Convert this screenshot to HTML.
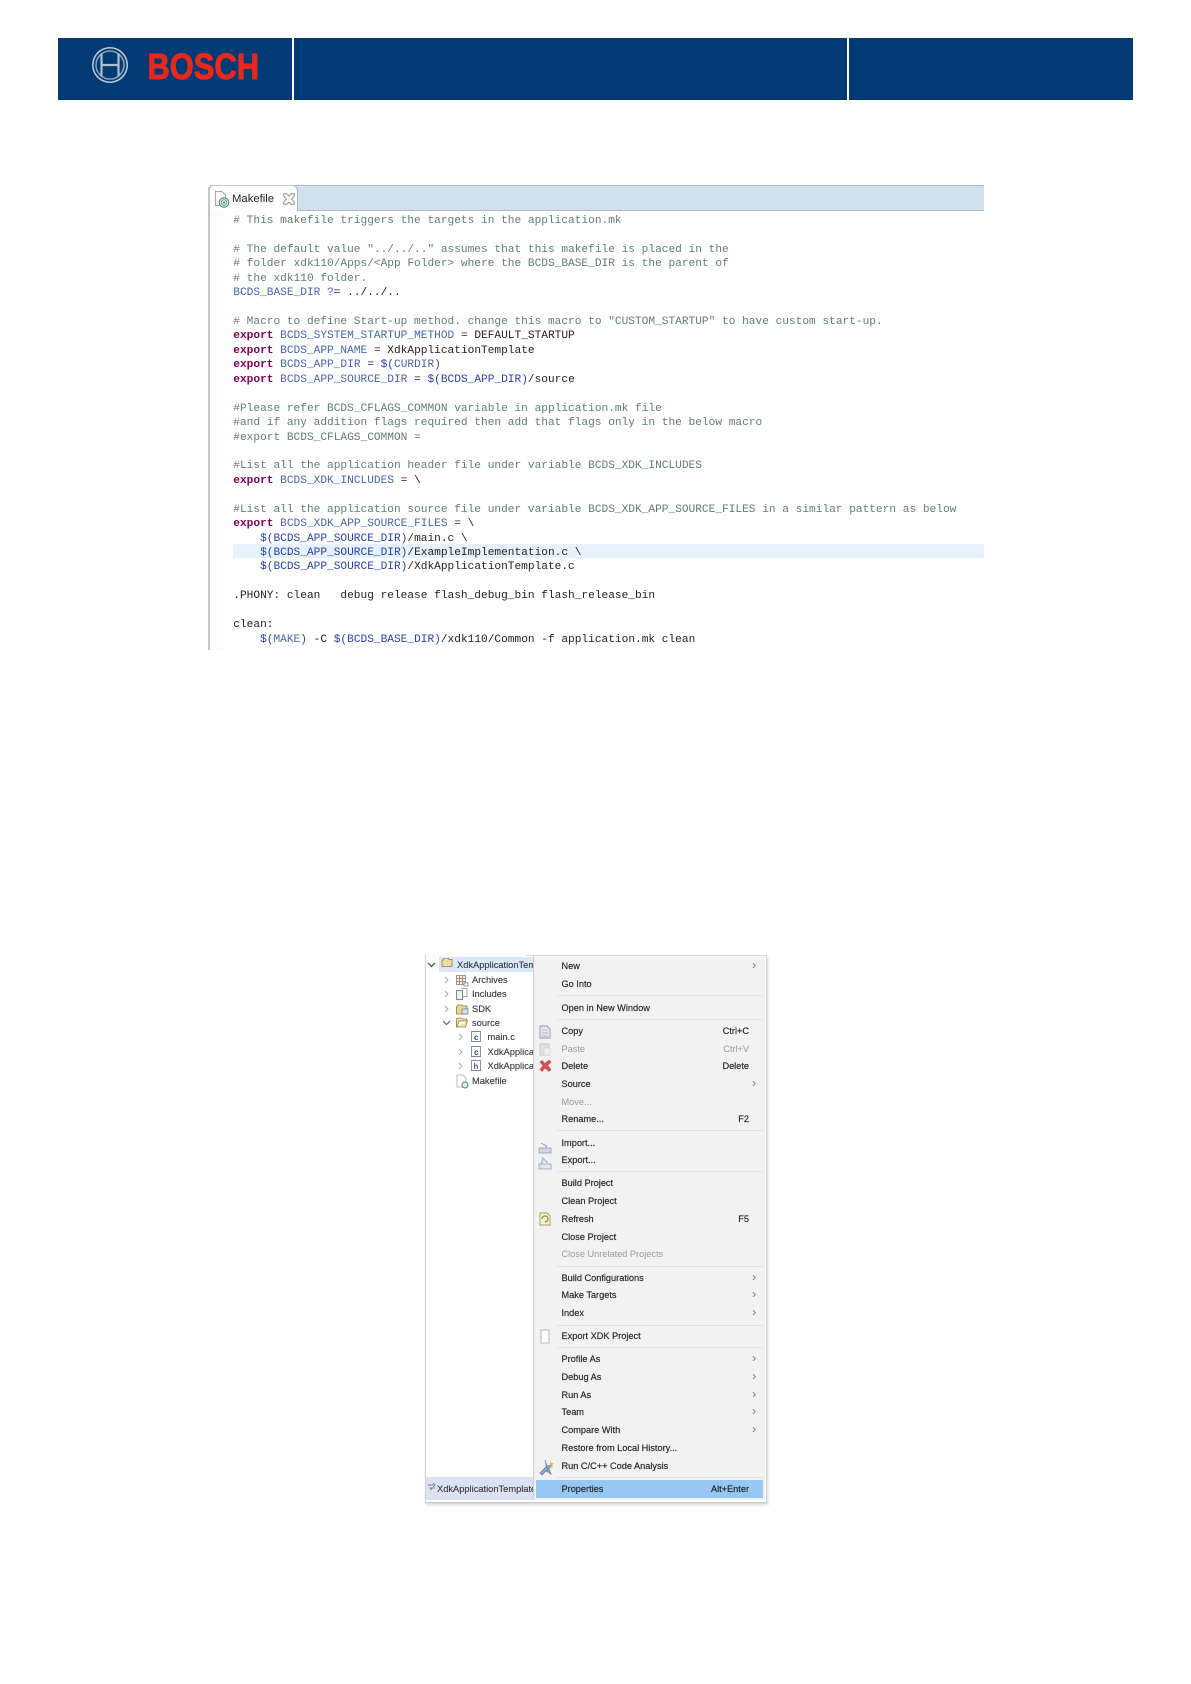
<!DOCTYPE html>
<html><head><meta charset="utf-8">
<style>
html,body{margin:0;padding:0;background:#fff}
#p{position:relative;width:1191px;height:1684px;overflow:hidden;background:#fff}
#p div,#p svg{position:absolute}
.c{left:233.3px;white-space:pre;height:16px;font:11.17px/16px "Liberation Mono",monospace;color:#222}
.g{color:#5f7d77}.e{color:#7f0055;font-weight:bold}.b{color:#4a64ad}.d{color:#2a40b0}
.m{left:561.500px;height:16px;font:9.2px/16px "Liberation Sans",sans-serif;color:#222;white-space:pre;-webkit-text-stroke:.15px #222}
.m.x{color:#9a9a9a;-webkit-text-stroke:0}
.s{left:660px;width:89px;text-align:right}
.a{left:750.500px;height:16px;font:12px/17px "Liberation Mono",monospace;color:#777}
.l{left:557px;width:206px;height:1px;background:#e1e1e1}
.t{height:16px;font:9.3px/16px "Liberation Sans",sans-serif;color:#333;white-space:pre;-webkit-text-stroke:.1px #333}
</style></head><body>
<div id="p">
<div style="left:58px;top:38px;width:1075px;height:62px;background:#013a75"></div>
<div style="left:292px;top:38px;width:2px;height:62px;background:#fff"></div>
<div style="left:847px;top:38px;width:2px;height:62px;background:#fff"></div>
<svg style="left:90px;top:45px" width="180" height="40" viewBox="0 0 180 40">
<circle cx="20" cy="20" r="17.200" fill="none" stroke="#c3ccd6" stroke-width="1.500"/>
<circle cx="20" cy="20" r="14" fill="none" stroke="#8ea0b5" stroke-width="1.600"/>
<path d="M11.500 8.500V31.500M28.500 8.500V31.500M11.500 20H28.500" fill="none" stroke="#b3bfcb" stroke-width="2.200"/>
<text x="57.500" y="34" font-family="Liberation Sans" font-weight="bold" font-size="36" fill="#e7291b" stroke="#e7291b" stroke-width="1" textLength="111.500" lengthAdjust="spacingAndGlyphs">BOSCH</text>
</svg>

<div style="left:208px;top:187px;width:2px;height:463px;background:#c6c6c8"></div>
<div style="left:210px;top:210px;width:14px;height:440px;background:#fbfbfb"></div>
<div style="left:210px;top:185px;width:774px;height:24px;background:#d2dfec;border-top:1px solid #b3b9c6;box-sizing:content-box"></div>
<div style="left:210px;top:209.500px;width:774px;height:1px;background:#b3b9c6"></div>
<div style="left:208px;top:185px;width:90px;height:26px;background:#fff;border-top:1px solid #c4c9d2;border-left:2px solid #c6c6c8;border-right:1px solid #b3b9c6;border-radius:5px 6px 0 0;box-sizing:border-box"></div>
<svg style="left:214px;top:191px" width="18" height="18" viewBox="0 0 18 18"><path d="M1.500 .500H8L11.500 4V14.500H1.500Z" fill="#fff" stroke="#a9a9a9"/><circle cx="10" cy="11.500" r="4.800" fill="#e9f3ec" stroke="#3f8c66" stroke-width="1"/><circle cx="10" cy="11.500" r="2.800" fill="none" stroke="#3f8c66" stroke-width=".8"/><circle cx="10" cy="11.500" r="1.100" fill="#3f8c66"/></svg>
<div style="left:232px;top:191px;height:16px;font:11.3px/16px 'Liberation Sans',sans-serif;color:#222;filter:blur(.25px)">Makefile</div>
<svg style="left:282.500px;top:193px" width="12" height="12" viewBox="0 0 12 12"><path d="M.500 1L3.500 .500 6 3 8.500 .500 11.500 1 11 3.500 8.500 6 11 8.500 11.500 11 8.500 11.500 6 9 3.500 11.500 .500 11 1 8.500 3.500 6 1 3.500Z" fill="none" stroke="#8e8e8e" stroke-width=".9"/></svg>
<div style="left:233px;top:544px;width:751px;height:14px;background:#e8f2fe"></div>

<div style="top:0;left:0;width:1191px;height:700px;filter:blur(.3px)">
<div class="c g" style="top:213px"># This makefile triggers the targets in the application.mk</div>
<div class="c g" style="top:241.900px"># The default value "../../.." assumes that this makefile is placed in the</div>
<div class="c g" style="top:256.300px"># folder xdk110/Apps/&lt;App Folder&gt; where the BCDS_BASE_DIR is the parent of</div>
<div class="c g" style="top:270.700px"># the xdk110 folder.</div>
<div class="c" style="top:285.100px"><span class="b">BCDS_BASE_DIR</span> <span class="b">?</span>= ../../..</div>
<div class="c g" style="top:314px"># Macro to define Start-up method. change this macro to "CUSTOM_STARTUP" to have custom start-up.</div>
<div class="c" style="top:328.400px"><span class="e">export</span> <span class="b">BCDS_SYSTEM_STARTUP_METHOD</span> = DEFAULT_STARTUP</div>
<div class="c" style="top:342.900px"><span class="e">export</span> <span class="b">BCDS_APP_NAME</span> = XdkApplicationTemplate</div>
<div class="c" style="top:357.300px"><span class="e">export</span> <span class="b">BCDS_APP_DIR</span> = <span class="d">$(</span><span class="b">CURDIR</span><span class="d">)</span></div>
<div class="c" style="top:371.700px"><span class="e">export</span> <span class="b">BCDS_APP_SOURCE_DIR</span> = <span class="d">$(BCDS_APP_DIR)</span>/source</div>
<div class="c g" style="top:400.600px">#Please refer BCDS_CFLAGS_COMMON variable in application.mk file</div>
<div class="c g" style="top:415px">#and if any addition flags required then add that flags only in the below macro</div>
<div class="c g" style="top:429.500px">#export BCDS_CFLAGS_COMMON =</div>
<div class="c g" style="top:458.300px">#List all the application header file under variable BCDS_XDK_INCLUDES</div>
<div class="c" style="top:472.700px"><span class="e">export</span> <span class="b">BCDS_XDK_INCLUDES</span> = \</div>
<div class="c g" style="top:501.600px">#List all the application source file under variable BCDS_XDK_APP_SOURCE_FILES in a similar pattern as below</div>
<div class="c" style="top:516px"><span class="e">export</span> <span class="b">BCDS_XDK_APP_SOURCE_FILES</span> = \</div>
<div class="c" style="top:530.500px">    <span class="d">$(BCDS_APP_SOURCE_DIR)</span>/main.c \</div>
<div class="c" style="top:544.900px">    <span class="d">$(BCDS_APP_SOURCE_DIR)</span>/ExampleImplementation.c \</div>
<div class="c" style="top:559.300px">    <span class="d">$(BCDS_APP_SOURCE_DIR)</span>/XdkApplicationTemplate.c</div>
<div class="c" style="top:588.200px">.PHONY: clean   debug release flash_debug_bin flash_release_bin</div>
<div class="c" style="top:617.100px">clean:</div>
<div class="c" style="top:631.500px">    <span class="d">$(</span><span class="b">MAKE</span><span class="d">)</span> -C <span class="d">$(BCDS_BASE_DIR)</span>/xdk110/Common -f application.mk clean</div>
</div>

<div style="left:425px;top:955px;width:340px;height:547px;background:#fff;border-left:1px solid #d4d4d4;border-right:1px solid #d4d4d4;border-bottom:1px solid #c8c8c8;box-shadow:1px 2px 3px rgba(0,0,0,.16)"></div>
<div style="left:526px;top:955px;width:240px;height:1px;background:#d8d8d8"></div>
<div style="left:439px;top:957px;width:94px;height:15px;background:#d9e8fb"></div>
<div style="left:426px;top:1477px;width:107px;height:23px;background:#dbe2f1"></div>
<div style="left:533px;top:956px;width:232px;height:544px;background:#f2f2f2;border-left:1px solid #cfcfcf;box-sizing:border-box"></div>
<div style="left:536px;top:1480px;width:227px;height:18px;background:#97c8f3"></div>

<svg style="left:427px;top:958px" width="106" height="132" viewBox="427 958 106 132">
<path d="M428 963l3.500 3.500 3.500-3.500" fill="none" stroke="#444" stroke-width="1.200"/>
<path d="M442 961l2 -3h4l1 1.500h3v7h-10z" fill="#f2dc9e" stroke="#8b7a4a" stroke-width=".8"/>
<path d="M445 977l3 3-3 3M445 991l3 3-3 3M445 1006l3 3-3 3M459 1034l3 3-3 3M459 1049l3 3-3 3M459 1063l3 3-3 3" fill="none" stroke="#aaa"/>
<path d="M443 1021l3.500 3.500 3.500-3.500" fill="none" stroke="#666" stroke-width="1.200"/>
<path d="M456.500 975.500h9v9h-9zM456.500 978.500h9M456.500 981.500h9M459.500 975.500v9M462.500 975.500v9" fill="#f6f0e6" stroke="#8a7a6a" stroke-width=".8"/>
<rect x="464" y="983" width="4" height="3" fill="#fff" stroke="#567" stroke-width=".6"/>
<path d="M456.500 990.500h6v9h-6z" fill="#eef3ee" stroke="#6f8f8f"/><path d="M461 988.500h6v8h-4" fill="none" stroke="#8c8c8c" stroke-width=".8"/>
<path d="M456.500 1007l1.500-2h4l1 1h4v8h-10.500z" fill="#f2d68a" stroke="#8a7a4a" stroke-width=".8"/><rect x="462" y="1009" width="6" height="5" fill="#cfe0ee" stroke="#567" stroke-width=".6"/>
<path d="M456.500 1027v-8l1.500-1h3l1 1h5v2h-8l-2 6zm0 0h9l2-6" fill="#f6e3a7" stroke="#8a7a4a" stroke-width=".8"/>
<path d="M473.500 1031.500h7v10h-9v-10z" fill="#fff" stroke="#7d8896" stroke-width=".9"/><text x="474" y="1040" font-size="8" font-family="Liberation Sans" font-weight="bold" fill="#2a4a8a">c</text>
<path d="M473.500 1046.500h7v10h-9v-10z" fill="#fff" stroke="#7d8896" stroke-width=".9"/><text x="474" y="1055" font-size="8" font-family="Liberation Sans" font-weight="bold" fill="#2a4a8a">c</text>
<path d="M473.500 1060.500h7v10h-9v-10z" fill="#fff" stroke="#7d8896" stroke-width=".9"/><text x="473.500" y="1069" font-size="8" font-family="Liberation Sans" font-weight="bold" fill="#6a4a9a">h</text>
<path d="M457 1075h6l3 3v9h-9z" fill="#fff" stroke="#aaa" stroke-width=".8"/><circle cx="465" cy="1085" r="3" fill="#dfeee4" stroke="#4b8c6a"/>
</svg>
<div class="t" style="left:457px;top:957px;width:76px;overflow:hidden">XdkApplicationTemplate</div>
<div class="t" style="left:472px;top:972px">Archives</div>
<div class="t" style="left:472px;top:986px">Includes</div>
<div class="t" style="left:472px;top:1001px">SDK</div>
<div class="t" style="left:472px;top:1015px">source</div>
<div class="t" style="left:487.500px;top:1029px">main.c</div>
<div class="t" style="left:487.500px;top:1044px;width:45px;overflow:hidden">XdkApplicationTemplate.c</div>
<div class="t" style="left:487.500px;top:1058px;width:45px;overflow:hidden">XdkApplicationTemplate.h</div>
<div class="t" style="left:472px;top:1073px">Makefile</div>
<div class="t" style="left:437px;top:1481px;width:96px;overflow:hidden">XdkApplicationTemplate</div>
<svg style="left:427px;top:1482px" width="10" height="10" viewBox="0 0 10 10"><path d="M1 3h5M6 1l2 2-2 2M8 6h-5l2 2" fill="none" stroke="#6a7f9a"/></svg>

<div class="m" style="top:958px">New</div>
<div class="m" style="top:976px">Go Into</div>
<div class="m" style="top:999.500px">Open in New Window</div>
<div class="m" style="top:1023px">Copy</div>
<div class="m x" style="top:1041px">Paste</div>
<div class="m" style="top:1058px">Delete</div>
<div class="m" style="top:1076px">Source</div>
<div class="m x" style="top:1093.500px">Move...</div>
<div class="m" style="top:1111px">Rename...</div>
<div class="m" style="top:1135px">Import...</div>
<div class="m" style="top:1152px">Export...</div>
<div class="m" style="top:1175px">Build Project</div>
<div class="m" style="top:1192.500px">Clean Project</div>
<div class="m" style="top:1210.500px">Refresh</div>
<div class="m" style="top:1228.500px">Close Project</div>
<div class="m x" style="top:1246px">Close Unrelated Projects</div>
<div class="m" style="top:1269.500px">Build Configurations</div>
<div class="m" style="top:1287px">Make Targets</div>
<div class="m" style="top:1304.500px">Index</div>
<div class="m" style="top:1328px">Export XDK Project</div>
<div class="m" style="top:1351px">Profile As</div>
<div class="m" style="top:1369px">Debug As</div>
<div class="m" style="top:1386.500px">Run As</div>
<div class="m" style="top:1404px">Team</div>
<div class="m" style="top:1422px">Compare With</div>
<div class="m" style="top:1440px">Restore from Local History...</div>
<div class="m" style="top:1457.500px">Run C/C++ Code Analysis</div>
<div class="m" style="top:1481px">Properties</div>

<div class="m s" style="top:1023px">Ctrl+C</div>
<div class="m s x" style="top:1041px">Ctrl+V</div>
<div class="m s" style="top:1058px">Delete</div>
<div class="m s" style="top:1111px">F2</div>
<div class="m s" style="top:1210.500px">F5</div>
<div class="m s" style="top:1481px">Alt+Enter</div>

<div class="a" style="top:958px">›</div>
<div class="a" style="top:1076px">›</div>
<div class="a" style="top:1269.500px">›</div>
<div class="a" style="top:1287px">›</div>
<div class="a" style="top:1304.500px">›</div>
<div class="a" style="top:1351px">›</div>
<div class="a" style="top:1369px">›</div>
<div class="a" style="top:1386.500px">›</div>
<div class="a" style="top:1404px">›</div>
<div class="a" style="top:1422px">›</div>

<div class="l" style="top:995px"></div>
<div class="l" style="top:1019px"></div>
<div class="l" style="top:1130px"></div>
<div class="l" style="top:1171px"></div>
<div class="l" style="top:1266px"></div>
<div class="l" style="top:1325px"></div>
<div class="l" style="top:1347px"></div>
<div class="l" style="top:1477px"></div>

<svg style="left:536px;top:1022px" width="20" height="470" viewBox="536 1022 20 470">
<path d="M540 1026h7l3 3v9h-10z" fill="#e8eaee" stroke="#8f96a2" stroke-width=".9"/><path d="M542 1030h6M542 1033h6M542 1036h6" stroke="#9aa2ae" stroke-width=".7"/>
<path d="M540 1044h9v11h-9z" fill="#e2e2e2" stroke="#c9c9c9"/><rect x="544" y="1048" width="6" height="7" fill="#efefef" stroke="#cfcfcf" stroke-width=".6"/>
<path d="M540 1062l2-1.500 3 3 4-3.500 2 2-3.500 3.500 3.500 4-2 2-4-3.500-3 3.500-2-2 3-4z" fill="#dc4d4d" stroke="#b85050" stroke-width=".6"/>
<path d="M539 1148h12v5h-12zM541 1143l6 3-1 2" fill="#cfd9e6" stroke="#8ba0bc" stroke-width=".8"/>
<path d="M539 1164h12v5h-12zM541 1164l2-6 5 5" fill="#dfe6ee" stroke="#8ba0bc" stroke-width=".8"/>
<path d="M540 1213h7l3 3v9h-10z" fill="#f9f0c8" stroke="#a99b60" stroke-width=".9"/><path d="M542 1219a3 3 0 1 1 3 3" fill="none" stroke="#7b8b3a" stroke-width="1.200"/>
<path d="M541 1330h8v13h-8z" fill="#fdfdfd" stroke="#b8b8b8"/>
<path d="M540 1473l6-6 2 2-6 6zM545 1460l2 6 5-1-3 4 2 5-5-3" fill="#8ea8cf" stroke="#5f7ba8" stroke-width=".7"/><path d="M550 1460l1 3 3 0-2 2 1 3-3-2" fill="#e7b93e"/>
</svg>
</div>
</body></html>
